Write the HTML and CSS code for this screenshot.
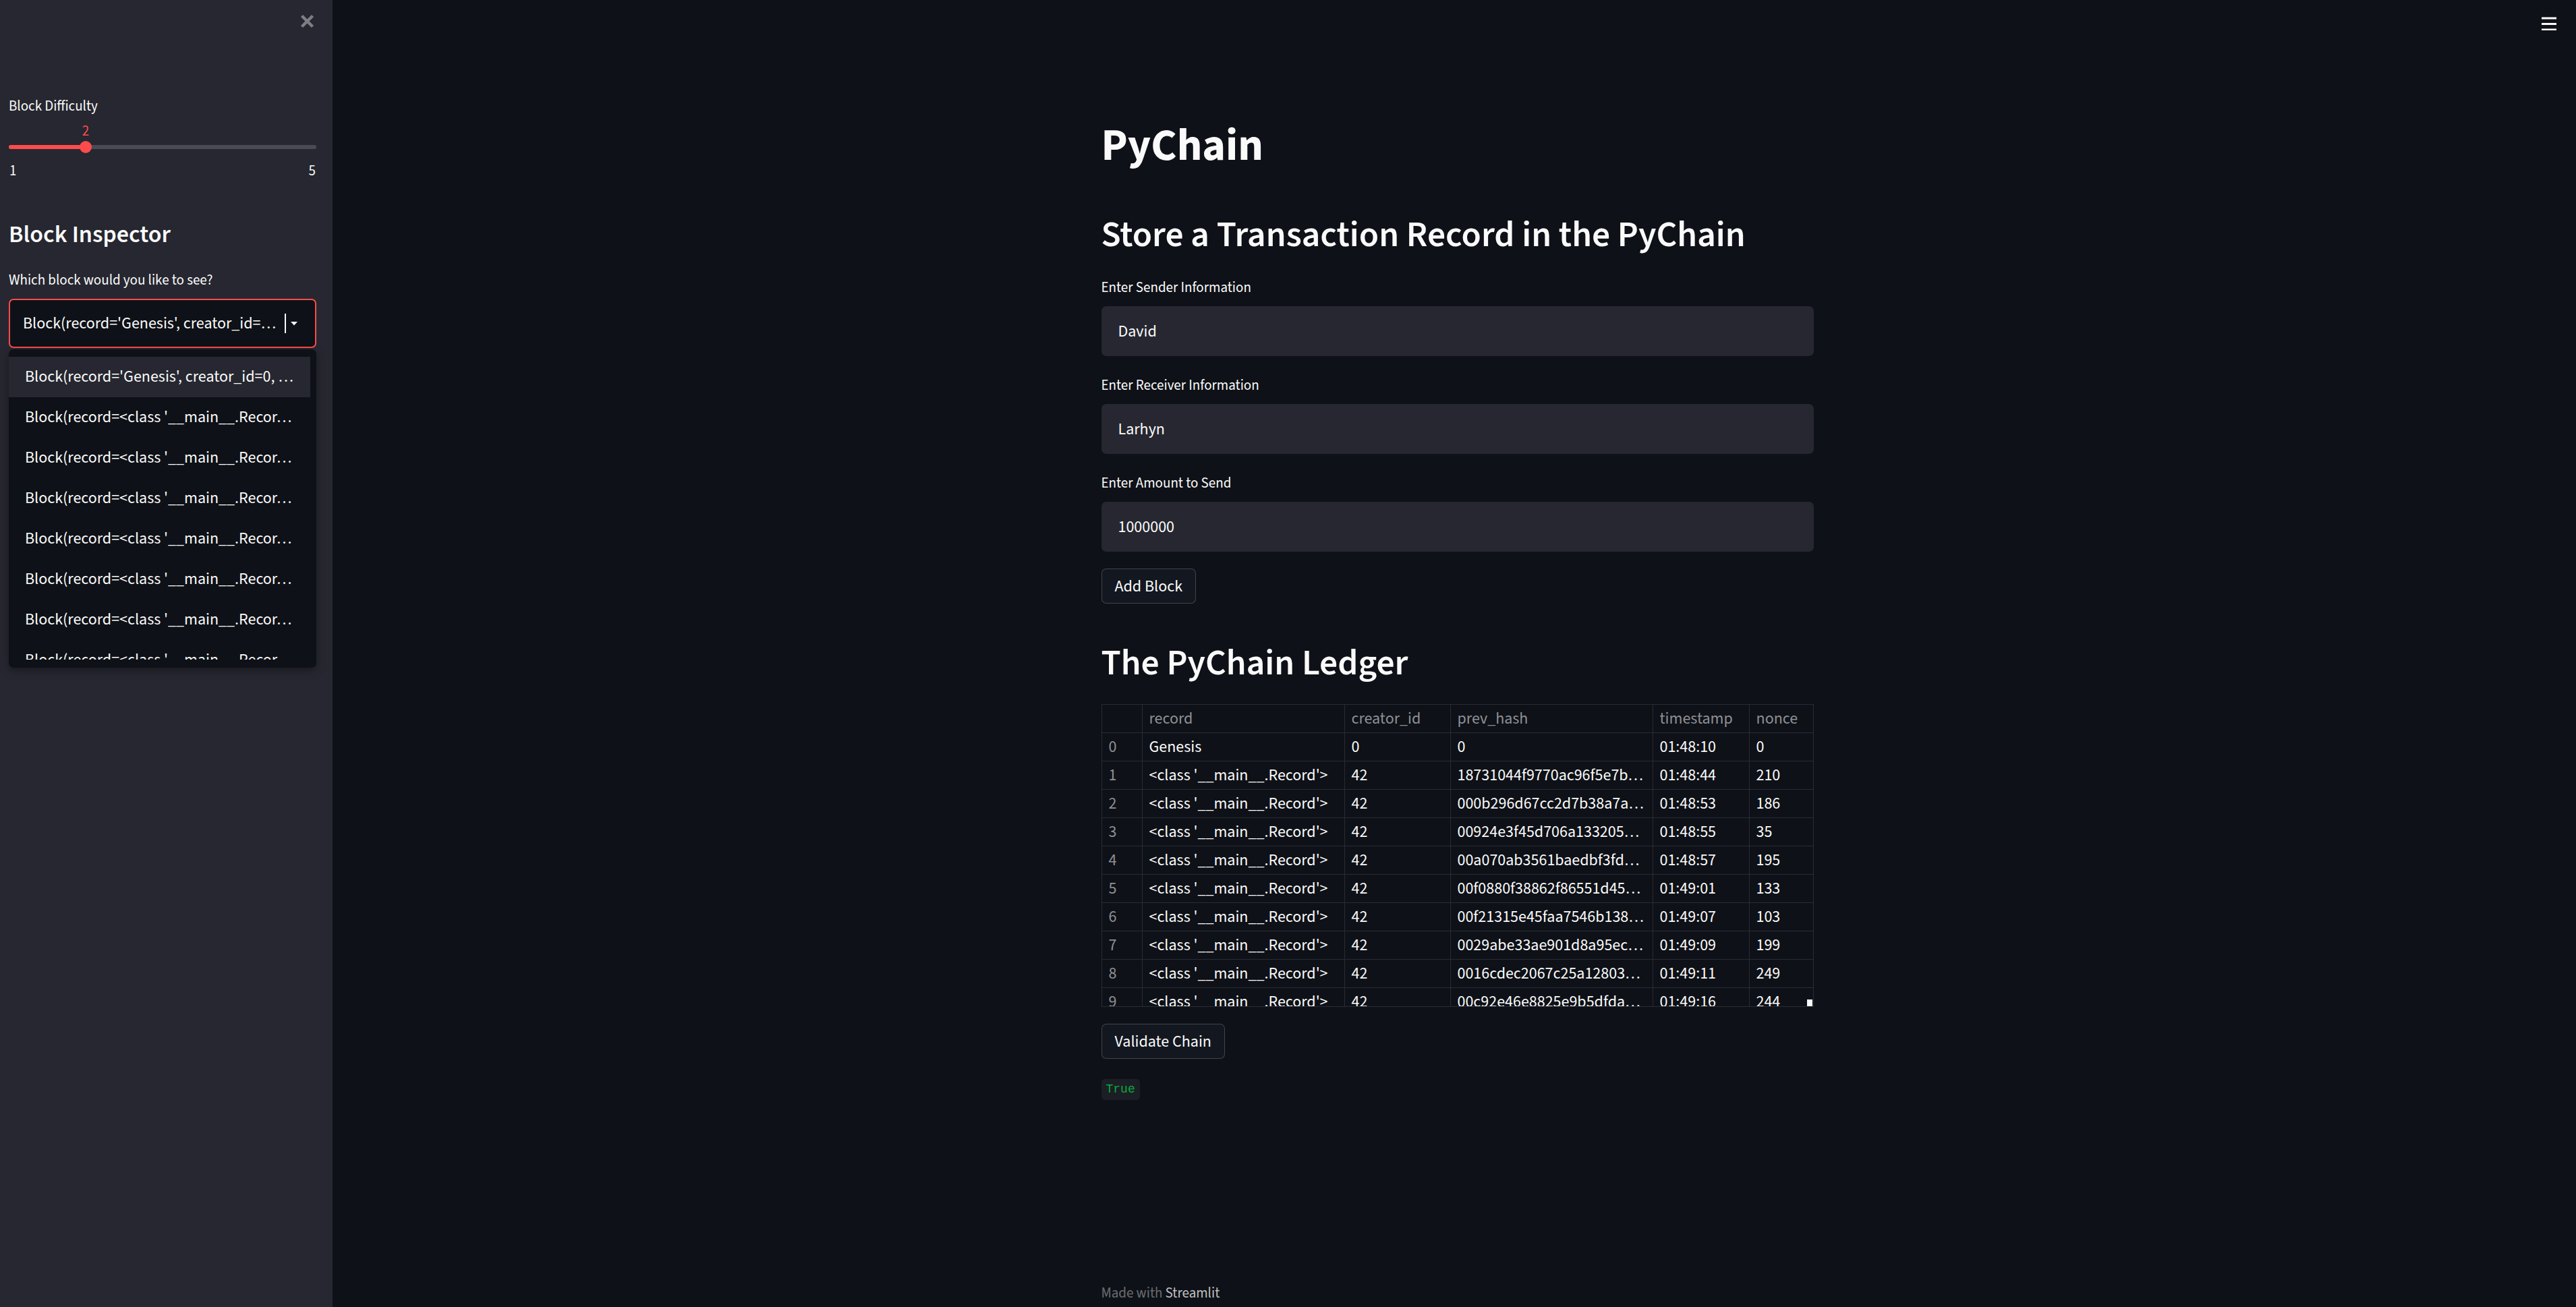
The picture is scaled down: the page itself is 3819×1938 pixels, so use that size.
FILE: index.html
```html
<!DOCTYPE html>
<html lang="en">
<head>
<meta charset="utf-8">
<title>PyChain · Streamlit</title>
<link rel="stylesheet" href="styles.css">
</head>
<body>
<div class="app">
  <aside class="sidebar">
    <div class="sb-top">
      <button class="sb-close" aria-label="Close sidebar">
        <svg width="21" height="21" viewBox="0 0 21 21"><path d="M2.5 2.5 L18.5 18.5 M18.5 2.5 L2.5 18.5" stroke="#7e7f85" stroke-width="4.5"/></svg>
      </button>
    </div>
    <div class="sb-content">
      <div class="w-label sb-slider-label">Block Difficulty</div>
      <div class="slider">
        <div class="slider-track">
          <div class="slider-fill" style="width:25%"></div>
          <div class="slider-thumb" style="left:25%"><span class="slider-value">2</span></div>
        </div>
        <div class="slider-ticks"><span>1</span><span>5</span></div>
      </div>
      <h2 class="sb-h2">Block Inspector</h2>
      <div class="w-label sb-select-label">Which block would you like to see?</div>
      <div class="select-wrap">
        <div class="select">
          <span class="select-text">Block(record='Genesis', creator_id=…</span>
          <span class="select-caret"></span>
          <svg class="select-arrow" width="10" height="6" viewBox="0 0 10 6"><polygon points="0,0 10,0 5,5.5" fill="#fafafa"/></svg>
        </div>
        <div class="menu">
          <ul class="menu-list">
            <li class="menu-item menu-item-active">Block(record='Genesis', creator_id=0, …</li>
            <li class="menu-item">Block(record=&lt;class '__main__.Recor…</li>
            <li class="menu-item">Block(record=&lt;class '__main__.Recor…</li>
            <li class="menu-item">Block(record=&lt;class '__main__.Recor…</li>
            <li class="menu-item">Block(record=&lt;class '__main__.Recor…</li>
            <li class="menu-item">Block(record=&lt;class '__main__.Recor…</li>
            <li class="menu-item">Block(record=&lt;class '__main__.Recor…</li>
            <li class="menu-item">Block(record=&lt;class '__main__.Recor…</li>
          </ul>
        </div>
      </div>
    </div>
  </aside>
  <main class="main">
    <header class="topbar">
      <button class="hamburger" aria-label="Main menu">
        <svg width="22" height="20" viewBox="0 0 22 20"><rect x="0" y="0.5" width="22" height="3" fill="#fafafa"/><rect x="0" y="9" width="22" height="3" fill="#fafafa"/><rect x="0" y="17.5" width="22" height="3" fill="#fafafa"/></svg>
      </button>
    </header>
    <div class="block">
      <h1 class="title">PyChain</h1>
      <h2 class="h2 h2-store">Store a Transaction Record in the PyChain</h2>
      <div class="field">
        <label class="w-label">Enter Sender Information</label>
        <input class="input" type="text" value="David" readonly>
      </div>
      <div class="field">
        <label class="w-label">Enter Receiver Information</label>
        <input class="input" type="text" value="Larhyn" readonly>
      </div>
      <div class="field">
        <label class="w-label">Enter Amount to Send</label>
        <input class="input" type="text" value="1000000" readonly>
      </div>
      <button class="btn btn-add">Add Block</button>
      <h2 class="h2 h2-ledger">The PyChain Ledger</h2>
      <div class="df">
        <table class="df-table">
          <thead>
            <tr><th class="c-idx"></th><th class="c-rec">record</th><th class="c-cre">creator_id</th><th class="c-hash">prev_hash</th><th class="c-ts">timestamp</th><th class="c-non">nonce</th></tr>
          </thead>
          <tbody>
            <tr><td class="idx">0</td><td>Genesis</td><td>0</td><td>0</td><td>01:48:10</td><td>0</td></tr>
            <tr><td class="idx">1</td><td>&lt;class '__main__.Record'&gt;</td><td>42</td><td>18731044f9770ac96f5e7b…</td><td>01:48:44</td><td>210</td></tr>
            <tr><td class="idx">2</td><td>&lt;class '__main__.Record'&gt;</td><td>42</td><td>000b296d67cc2d7b38a7a…</td><td>01:48:53</td><td>186</td></tr>
            <tr><td class="idx">3</td><td>&lt;class '__main__.Record'&gt;</td><td>42</td><td>00924e3f45d706a133205…</td><td>01:48:55</td><td>35</td></tr>
            <tr><td class="idx">4</td><td>&lt;class '__main__.Record'&gt;</td><td>42</td><td>00a070ab3561baedbf3fd…</td><td>01:48:57</td><td>195</td></tr>
            <tr><td class="idx">5</td><td>&lt;class '__main__.Record'&gt;</td><td>42</td><td>00f0880f38862f86551d45…</td><td>01:49:01</td><td>133</td></tr>
            <tr><td class="idx">6</td><td>&lt;class '__main__.Record'&gt;</td><td>42</td><td>00f21315e45faa7546b138…</td><td>01:49:07</td><td>103</td></tr>
            <tr><td class="idx">7</td><td>&lt;class '__main__.Record'&gt;</td><td>42</td><td>0029abe33ae901d8a95ec…</td><td>01:49:09</td><td>199</td></tr>
            <tr><td class="idx">8</td><td>&lt;class '__main__.Record'&gt;</td><td>42</td><td>0016cdec2067c25a12803…</td><td>01:49:11</td><td>249</td></tr>
            <tr><td class="idx">9</td><td>&lt;class '__main__.Record'&gt;</td><td>42</td><td>00c92e46e8825e9b5dfda…</td><td>01:49:16</td><td>244</td></tr>
          </tbody>
        </table>
        <div class="df-scroll"></div>
      </div>
      <button class="btn btn-validate">Validate Chain</button>
      <div class="result"><code class="code-true">True</code></div>
    </div>
    <footer class="footer">Made with <span class="footer-brand">Streamlit</span></footer>
  </main>
</div>
</body>
</html>
```

FILE: styles.css
```css
* { box-sizing: border-box; }
html, body { margin: 0; padding: 0; }
body {
  background: #0e1117;
  color: #fafafa;
  font-family: "Source Sans 3", "Lato", sans-serif;
}
.app { display: flex; height: 100vh; overflow: hidden; }

/* Sidebar */
.sidebar { width: 493px; flex: none; background: #262730; position: relative; }
.sb-top { display: flex; justify-content: flex-end; padding: 21px 27px 0 0; height: 42px; }
.sb-close { background: none; border: 0; padding: 0; width: 21px; height: 21px; display: block; }
.sb-close svg { display: block; }
.sb-content { padding: 0 24px 0 13px; }
.w-label { display: block; font-size: 21px; line-height: 30px; height: 30px; white-space: nowrap; }
.sb-slider-label { margin-top: 100px; }
.slider { margin-top: 43px; }
.slider-track { position: relative; height: 6px; border-radius: 3px; background: #4a4b55; }
.slider-fill { position: absolute; left: 0; top: 0; bottom: 0; background: #ff4b4b; border-radius: 3px; }
.slider-thumb { position: absolute; top: 50%; width: 18px; height: 18px; margin: -9px 0 0 -9px; border-radius: 50%; background: #ff4b4b; }
.slider-value { position: absolute; left: 50%; top: -27px; transform: translateX(-50%); font-size: 21px; line-height: 24px; color: #ff4b4b; }
.slider-ticks { display: flex; justify-content: space-between; margin-top: 19.5px; font-size: 21px; line-height: 24px; padding: 0 1px; }
.sb-h2 { margin: 61.5px 0 0; font-size: 36px; line-height: 44px; font-weight: 600; }
.sb-select-label { margin-top: 29.5px; }
.select-wrap { position: relative; margin-top: 13.5px; }
.select { display: flex; align-items: center; height: 73px; border: 2px solid #ff4b4b; border-radius: 7px; background: #0e1117; padding: 0 26px 0 19px; font-size: 24px; }
.select-text { flex: 1; white-space: nowrap; overflow: hidden; }
.select-caret { width: 2px; height: 29px; background: #fafafa; margin: 0 7px 0 0; }
.select-arrow { display: block; }
.menu { position: absolute; left: 0; right: 0; top: calc(100% + 2px); height: 472px; background: #0e1117; border-radius: 7px; padding: 11px 9px 12px 0; box-shadow: 0 4px 14px rgba(0,0,0,0.35); }
.menu-list { list-style: none; margin: 0; padding: 0; height: 449px; overflow: hidden; }
.menu-item { height: 60px; line-height: 60px; padding-left: 24px; font-size: 24px; white-space: nowrap; overflow: hidden; }
.menu-item-active { background: #262730; }

/* Main */
.main { flex: 1; position: relative; display: flex; flex-direction: column; padding-left: 9px; }
.topbar { position: absolute; top: 25px; right: 29px; }
.hamburger { background: none; border: 0; padding: 0; display: block; }
.hamburger svg { display: block; }
.block { width: 1056px; margin: 0 auto; padding-top: 176px; }
.title { margin: 0; font-size: 66px; line-height: 80px; font-weight: 700; }
.h2 { margin: 0; font-size: 53.5px; line-height: 64px; font-weight: 600; }
.h2-store { margin-top: 59.5px; margin-bottom: 31.5px; }
.field + .field { margin-top: 28px; }
.field .w-label { margin-bottom: 13px; }
.input { display: block; width: 100%; height: 74px; border: 0; outline: none; border-radius: 7px; background: #262730; color: #fafafa; padding: 0 25px; font-family: inherit; font-size: 24px; }
.btn { display: block; height: 52px; padding: 0 19px; background: #131720; color: #fafafa; border: 1px solid rgba(250,250,250,0.2); border-radius: 7px; font-family: inherit; font-size: 24px; }
.btn-add { margin-top: 25px; }
.h2-ledger { margin-top: 55.5px; }
.df { position: relative; margin-top: 29.5px; height: 449px; overflow: hidden; border: 1px solid #2a2c34; border-top: 0; }
.df-table { border-collapse: collapse; table-layout: fixed; width: 1056px; margin-left: -1px; font-size: 24px; }
.df-table th, .df-table td { height: 42px; padding: 0 10px; border: 1px solid #2a2c34; text-align: left; font-weight: 400; white-space: nowrap; overflow: hidden; }
.df-table th { color: #8e9095; }
.df-table td.idx { color: #8e9095; }
.c-idx { width: 60px; }
.c-rec { width: 300px; }
.c-cre { width: 157px; }
.c-hash { width: 300px; }
.c-ts { width: 143px; }
.c-non { width: 96px; }
.df-scroll { position: absolute; right: 1px; bottom: 0; width: 8px; height: 10px; background: #fafafa; }
.btn-validate { margin-top: 25px; }
.result { margin-top: 30px; }
.code-true { display: inline-block; height: 31px; line-height: 31px; padding: 0 7px; background: #1b1e25; border-radius: 5px; color: #09ab3b; font-family: "Liberation Mono", monospace; font-size: 18px; }
.footer { width: 1056px; margin: auto auto 0; font-size: 21px; line-height: 30px; padding-bottom: 6px; color: rgba(250,250,250,0.4); }
.footer-brand { color: rgba(250,250,250,0.75); }
```
